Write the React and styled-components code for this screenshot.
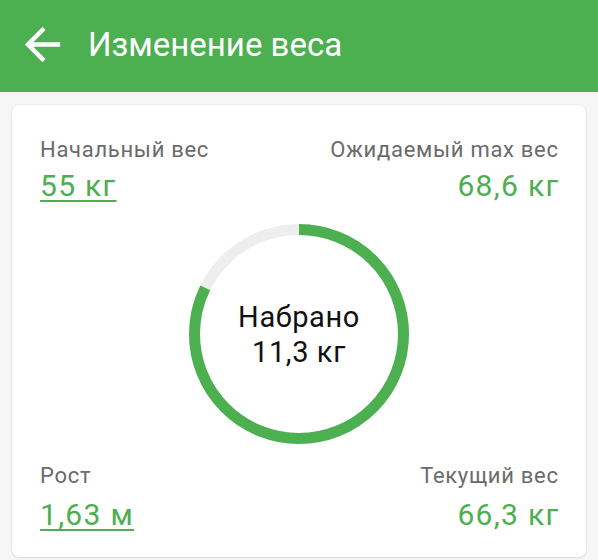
import React from "react";
import styled, { createGlobalStyle } from "styled-components";

const GREEN = "#4caf50";

const Global = createGlobalStyle`
  html, body { margin: 0; padding: 0; background: #f6f6f6; }
  body { font-family: Roboto, "Noto Sans", sans-serif; }
  * { box-sizing: border-box; }
`;

const Page = styled.div`
  width: 598px;
  min-height: 560px;
  background: #f6f6f6;
`;

const AppBar = styled.header`
  height: 92px;
  background: ${GREEN};
  display: flex;
  align-items: center;
  padding-left: 16px;
  color: #fff;
`;

const BackButton = styled.div`
  width: 53px;
  height: 53px;
  display: flex;
  align-items: center;
  justify-content: center;
  margin-top: -3px;
`;

const Title = styled.h1`
  margin: -2px 0 0 19px;
  font-size: 33px;
  font-weight: 400;
  line-height: 40px;
  color: #fff;
`;

const Card = styled.section`
  margin: 13px 12px 0 12px;
  background: #fff;
  border-radius: 7px;
  box-shadow: 0 0 2px rgba(0, 0, 0, 0.12), 0 1px 2px rgba(0, 0, 0, 0.08);
  padding: 33px 28px 25px 28px;
  display: flex;
  flex-direction: column;
`;

const Row = styled.div`
  display: flex;
  justify-content: space-between;
  align-items: flex-start;
`;

const Stat = styled.div`
  display: flex;
  flex-direction: column;
  align-items: ${(p) => (p.$right ? "flex-end" : "flex-start")};
  gap: ${(p) => p.$gap}px;
`;

const Label = styled.div`
  font-size: 22px;
  line-height: 24px;
  letter-spacing: 0.7px;
  margin-right: -0.7px;
  color: #6b6b6b;
`;

const Value = styled.div`
  font-size: 30px;
  line-height: 34px;
  letter-spacing: 1.3px;
  margin-right: -1.3px;
  color: ${GREEN};
  text-decoration: ${(p) => (p.$link ? "underline" : "none")};
  text-decoration-thickness: 2px;
  text-underline-offset: 4px;
`;

const RingWrap = styled.div`
  align-self: center;
  position: relative;
  width: 220px;
  height: 220px;
  margin: 21px 0 20px;
`;

const RingText = styled.div`
  position: absolute;
  inset: 0;
  display: flex;
  flex-direction: column;
  align-items: center;
  justify-content: center;
  font-size: 29px;
  line-height: 35px;
  letter-spacing: 0.6px;
  color: #111;
  padding-top: 2px;
`;

function Ring({ fraction }) {
  const r = 104.5;
  const c = 2 * Math.PI * r;
  return (
    <svg width="220" height="220" viewBox="0 0 220 220">
      <circle cx="110" cy="110" r={r} fill="none" stroke="#eeeeee" strokeWidth="11" />
      <circle
        cx="110"
        cy="110"
        r={r}
        fill="none"
        stroke={GREEN}
        strokeWidth="11"
        strokeDasharray={`${c * fraction} ${c}`}
        transform="rotate(-90 110 110)"
      />
    </svg>
  );
}

export default function App() {
  return (
    <Page>
      <Global />
      <AppBar>
        <BackButton>
          <svg width="53" height="53" viewBox="0 0 24 24" fill="#fff">
            <path d="M20 11H7.83l5.59-5.59L12 4l-8 8 8 8 1.41-1.41L7.83 13H20v-2z" />
          </svg>
        </BackButton>
        <Title>Изменение веса</Title>
      </AppBar>
      <Card>
        <Row>
          <Stat $gap={7}>
            <Label>Начальный вес</Label>
            <Value $link>55 кг</Value>
          </Stat>
          <Stat $right $gap={7}>
            <Label>Ожидаемый max вес</Label>
            <Value>68,6 кг</Value>
          </Stat>
        </Row>
        <RingWrap>
          <Ring fraction={0.822} />
          <RingText>
            <span>Набрано</span>
            <span>11,3 кг</span>
          </RingText>
        </RingWrap>
        <Row>
          <Stat $gap={10}>
            <Label>Рост</Label>
            <Value $link>1,63 м</Value>
          </Stat>
          <Stat $right $gap={10}>
            <Label>Текущий вес</Label>
            <Value>66,3 кг</Value>
          </Stat>
        </Row>
      </Card>
    </Page>
  );
}
